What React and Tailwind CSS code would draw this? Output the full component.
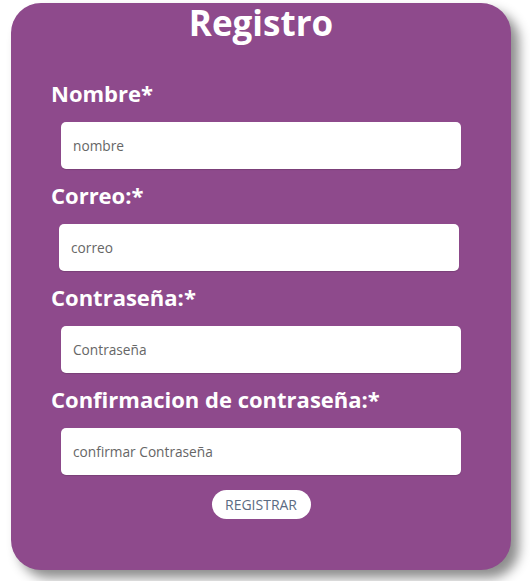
export default function App() {
  const fields = [
    { label: 'Nombre*', placeholder: 'nombre', shift: 'ml-[10px]' },
    { label: 'Correo:*', placeholder: 'correo', shift: 'ml-[8px]' },
    { label: 'Contraseña:*', placeholder: 'Contraseña', shift: 'ml-[10px]' },
    { label: 'Confirmacion de contraseña:*', placeholder: 'confirmar Contraseña', shift: 'ml-[10px]' },
  ];

  return (
    <div className="w-[530px] h-[581px] bg-white overflow-hidden" style={{ fontFamily: '"Open Sans", sans-serif' }}>
      <div className="ml-[11px] mt-[3px] w-[500px] h-[567px] rounded-[30px] bg-[#8e4a8c] shadow-[8px_8px_12px_rgba(0,0,0,0.45)] flex flex-col">
        <h1 className="text-center text-white text-[35px] leading-[40px] font-bold">Registro</h1>

        <div className="mt-[38px] pl-[40px] flex flex-col">
          {fields.map((f, i) => (
            <div key={i} className={i === 0 ? '' : 'mt-[14px]'}>
              <label className="block text-white text-[22px] leading-[24px] font-bold">{f.label}</label>
              <input
                type="text"
                placeholder={f.placeholder}
                className={`${f.shift} mt-[17px] block w-[400px] h-[47px] rounded-[5px] bg-white px-[12px] text-[13.7px] text-[#555] placeholder:text-[#666] outline-none shadow-[0_1px_1px_rgba(0,0,0,0.15)]`}
              />
            </div>
          ))}
        </div>

        <div className="mt-[15px] flex justify-center">
          <button className="w-[99px] h-[29px] rounded-full bg-white text-[14px] font-medium text-[#5b6b82]">
            REGISTRAR
          </button>
        </div>
      </div>
    </div>
  );
}
